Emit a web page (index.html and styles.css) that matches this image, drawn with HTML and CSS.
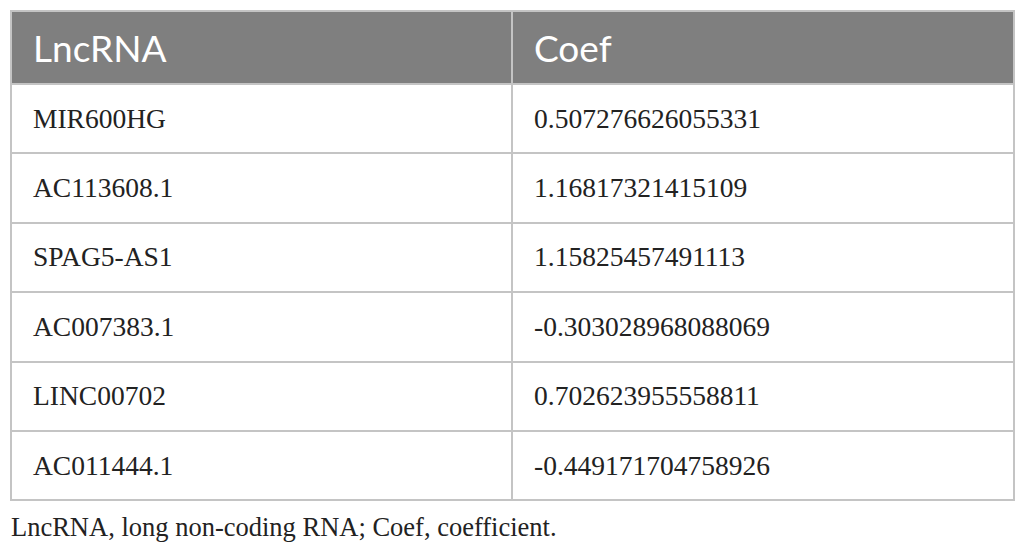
FILE: index.html
```html
<!DOCTYPE html>
<html>
<head>
<meta charset="utf-8">
<link rel="stylesheet" href="styles.css">
</head>
<body>
<div class="wrap">
<table class="data">
<thead>
<tr><th>LncRNA</th><th>Coef</th></tr>
</thead>
<tbody>
<tr><td>MIR600HG</td><td>0.507276626055331</td></tr>
<tr><td>AC113608.1</td><td>1.16817321415109</td></tr>
<tr><td>SPAG5-AS1</td><td>1.15825457491113</td></tr>
<tr><td>AC007383.1</td><td>-0.303028968088069</td></tr>
<tr><td>LINC00702</td><td>0.702623955558811</td></tr>
<tr><td>AC011444.1</td><td>-0.449171704758926</td></tr>
</tbody>
</table>
<p class="note">LncRNA, long non-coding RNA; Coef, coefficient.</p>
</div>
</body>
</html>
```
FILE: styles.css
```css
html, body {
  margin: 0;
  padding: 0;
  background: #ffffff;
}
.wrap {
  padding: 10px 0 0 10px;
}
.data {
  width: 1005px;
  border-collapse: collapse;
  border: 2px solid #c4c4c4;
  table-layout: fixed;
}
.data th {
  background: #7f7f7f;
  color: #ffffff;
  font-family: Lato, "Open Sans", sans-serif;
  font-weight: normal;
  font-size: 37px;
  text-align: left;
  height: 73px;
  padding: 0 0 0 21px;
  border-left: 2px solid #c4c4c4;
  border-bottom: 2px solid #c4c4c4;
  box-sizing: border-box;
}
.data th:first-child, .data td:first-child {
  width: 501px;
}
.data td {
  font-family: "Liberation Serif", "Times New Roman", serif;
  font-size: 27.5px;
  color: #222222;
  height: 67.4px;
  padding: 0 0 0 21px;
  border: 2px solid #c4c4c4;
}
.note {
  margin: 11px 0 0 1px;
  font-family: "Liberation Serif", "Times New Roman", serif;
  font-size: 26.5px;
  color: #222222;
}
```
